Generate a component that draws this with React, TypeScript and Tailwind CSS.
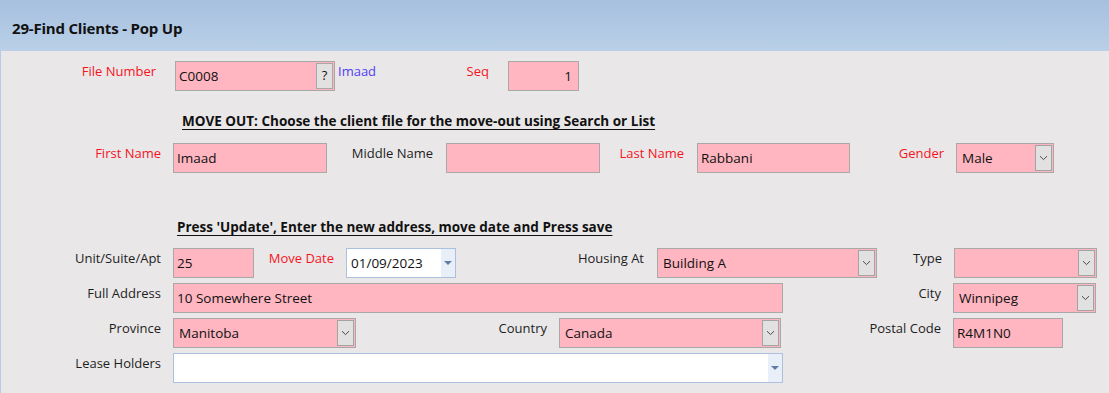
import React from "react";

const font = { fontFamily: '"Open Sans", "Noto Sans", sans-serif' };

function Label({ w, text, red, ml = 0 }: { w: number; text: string; red?: boolean; ml?: number }) {
  return (
    <div
      className={`shrink-0 pt-[2px] text-right text-[13px] leading-[16px] whitespace-nowrap ${red ? "text-[#f5141e]" : "text-[#1e1e1e]"}`}
      style={{ width: w, marginLeft: ml }}
    >
      {text}
    </div>
  );
}

function Chevron() {
  return (
    <svg width="9" height="6" viewBox="0 0 9 6" className="block">
      <path d="M1 1.2 L4.5 4.6 L8 1.2" fill="none" stroke="#4a4a4a" strokeWidth="1" />
    </svg>
  );
}

function TextBox({ w, ml, value, right }: { w: number; ml: number; value?: string; right?: boolean }) {
  return (
    <div
      className={`flex h-[30px] shrink-0 items-center border border-[#a8a8a8] bg-[#ffb6c1] pl-[3px] text-[13.5px] text-[#111] ${right ? "justify-end pr-[6px]" : ""}`}
      style={{ width: w, marginLeft: ml }}
    >
      {value}
    </div>
  );
}

function Select({ w, ml, value }: { w: number; ml: number; value?: string }) {
  return (
    <div
      className="flex h-[30px] shrink-0 items-stretch border border-[#a8a8a8] bg-[#ffb6c1] p-[1px] text-[13.5px] text-[#111]"
      style={{ width: w, marginLeft: ml }}
    >
      <div className="flex flex-1 items-center pl-[4px]">{value}</div>
      <div className="flex w-[17px] items-center justify-center border border-[#a3a3a3] bg-[#e1e1e1]">
        <Chevron />
      </div>
    </div>
  );
}

function BlueDrop({ w, ml, value }: { w: number; ml: number; value?: string }) {
  return (
    <div
      className="flex h-[30px] shrink-0 items-stretch border border-[#aac0dc] bg-white text-[13.5px] text-[#111]"
      style={{ width: w, marginLeft: ml }}
    >
      <div className="flex flex-1 items-center pl-[4px]">{value}</div>
      <div className="flex w-[14px] items-center justify-center bg-[#e8eff9]">
        <svg width="8" height="4" viewBox="0 0 8 4" className="block">
          <path d="M0 0 L8 0 L4 4 Z" fill="#5d7ea6" />
        </svg>
      </div>
    </div>
  );
}

export default function App() {
  return (
    <div className="h-[393px] w-[1109px] overflow-hidden bg-[#e9e7e8]" style={font}>
      <div className="flex h-[51px] items-center bg-gradient-to-b from-[#a6c0df] to-[#bad0e8] pl-[12px] pt-[6px]">
        <span className="text-[15px] font-bold tracking-[-0.2px] text-[#111]">29-Find Clients - Pop Up</span>
      </div>
      <div className="h-[342px] border-l border-[#b6cbe6] pt-[10px]">
        {/* Row 1 */}
        <div className="flex items-start">
          <Label w={155} text="File Number" red />
          <div className="ml-[19px] flex h-[30px] w-[160px] shrink-0 items-stretch border border-[#a8a8a8] bg-[#ffb6c1] py-[1px] pr-[1px] text-[13.5px] text-[#111]">
            <div className="flex flex-1 items-center pl-[3px]">C0008</div>
            <div className="flex w-[17px] items-center justify-center border border-[#a8a8a8] bg-[#e1e1e1] text-[13px]">?</div>
          </div>
          <div className="ml-[3px] w-[40px] shrink-0 pt-[2px] text-[13px] leading-[16px] text-[#4f3ff5]">Imaad</div>
          <Label w={111} text="Seq" red />
          <TextBox w={71} ml={19} value="1" right />
        </div>
        {/* Heading 1 */}
        <div className="mt-[20px] h-[20px] pl-[181px] text-[13.5px] font-bold leading-[20px] text-[#111] underline underline-offset-[3px]">
          MOVE OUT: Choose the client file for the move-out using Search or List
        </div>
        {/* Row 2 */}
        <div className="mt-[12px] flex items-start">
          <Label w={160} text="First Name" red />
          <TextBox w={154} ml={12} value="Imaad" />
          <Label w={106} text="Middle Name" />
          <TextBox w={154} ml={13} />
          <Label w={84} text="Last Name" red />
          <TextBox w={153} ml={13} value="Rabbani" />
          <Label w={94} text="Gender" red />
          <Select w={98} ml={12} value="Male" />
        </div>
        {/* Heading 2 */}
        <div className="mt-[44px] h-[20px] pl-[176px] text-[13.5px] font-bold leading-[20px] text-[#111] underline underline-offset-[3px]">
          Press 'Update', Enter the new address, move date and Press save
        </div>
        {/* Row 3 */}
        <div className="mt-[11px] flex items-start">
          <Label w={160} text="Unit/Suite/Apt" />
          <TextBox w={81} ml={12} value="25" />
          <Label w={80} text="Move Date" red />
          <BlueDrop w={110} ml={12} value="01/09/2023" />
          <Label w={188} text="Housing At" />
          <Select w={220} ml={13} value="Building A" />
          <Label w={65} text="Type" />
          <Select w={143} ml={12} />
        </div>
        {/* Row 4 */}
        <div className="mt-[5px] flex items-start">
          <Label w={160} text="Full Address" />
          <TextBox w={610} ml={12} value="10 Somewhere Street" />
          <Label w={158} text="City" />
          <Select w={143} ml={12} value="Winnipeg" />
        </div>
        {/* Row 5 */}
        <div className="mt-[5px] flex items-start">
          <Label w={160} text="Province" />
          <Select w={183} ml={12} value="Manitoba" />
          <Label w={191} text="Country" />
          <Select w={222} ml={12} value="Canada" />
          <Label w={160} text="Postal Code" />
          <TextBox w={110} ml={12} value="R4M1N0" />
        </div>
        {/* Row 6 */}
        <div className="mt-[5px] flex items-start">
          <Label w={160} text="Lease Holders" />
          <BlueDrop w={610} ml={12} />
        </div>
      </div>
    </div>
  );
}
